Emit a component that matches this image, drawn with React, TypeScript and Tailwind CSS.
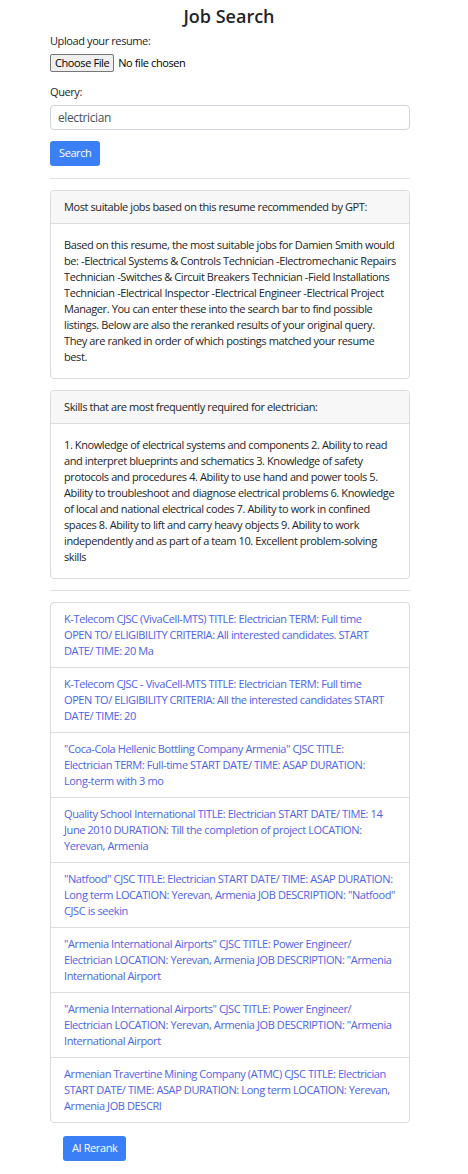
import React from 'react';

const jobs: string[][] = [
  ['K-Telecom CJSC (VivaCell-MTS) TITLE: Electrician TERM: Full time', 'OPEN TO/ ELIGIBILITY CRITERIA: All interested candidates. START', 'DATE/ TIME: 20 Ma'],
  ['K-Telecom CJSC - VivaCell-MTS TITLE: Electrician TERM: Full time', 'OPEN TO/ ELIGIBILITY CRITERIA: All the interested candidates START', 'DATE/ TIME: 20'],
  ['"Coca-Cola Hellenic Bottling Company Armenia" CJSC TITLE:', 'Electrician TERM: Full-time START DATE/ TIME: ASAP DURATION:', 'Long-term with 3 mo'],
  ['Quality School International TITLE: Electrician START DATE/ TIME: 14', 'June 2010 DURATION: Till the completion of project LOCATION:', 'Yerevan, Armenia'],
  ['"Natfood" CJSC TITLE: Electrician START DATE/ TIME: ASAP DURATION:', 'Long term LOCATION: Yerevan, Armenia JOB DESCRIPTION: "Natfood"', 'CJSC is seekin'],
  ['"Armenia International Airports" CJSC TITLE: Power Engineer/', 'Electrician LOCATION: Yerevan, Armenia JOB DESCRIPTION: "Armenia', 'International Airport'],
  ['"Armenia International Airports" CJSC TITLE: Power Engineer/', 'Electrician LOCATION: Yerevan, Armenia JOB DESCRIPTION: "Armenia', 'International Airport'],
  ['Armenian Travertine Mining Company (ATMC) CJSC TITLE: Electrician', 'START DATE/ TIME: ASAP DURATION: Long term LOCATION: Yerevan,', 'Armenia JOB DESCRI'],
];

const gptLines = [
  'Based on this resume, the most suitable jobs for Damien Smith would',
  'be: -Electrical Systems & Controls Technician -Electromechanic Repairs',
  'Technician -Switches & Circuit Breakers Technician -Field Installations',
  'Technician -Electrical Inspector -Electrical Engineer -Electrical Project',
  'Manager. You can enter these into the search bar to find possible',
  'listings. Below are also the reranked results of your original query.',
  'They are ranked in order of which postings matched your resume',
  'best.',
];

const skillLines = [
  '1. Knowledge of electrical systems and components 2. Ability to read',
  'and interpret blueprints and schematics 3. Knowledge of safety',
  'protocols and procedures 4. Ability to use hand and power tools 5.',
  'Ability to troubleshoot and diagnose electrical problems 6. Knowledge',
  'of local and national electrical codes 7. Ability to work in confined',
  'spaces 8. Ability to lift and carry heavy objects 9. Ability to work',
  'independently and as part of a team 10. Excellent problem-solving',
  'skills',
];

const Lines: React.FC<{ lines: string[] }> = ({ lines }) => (
  <>
    {lines.map((l, i) => (
      <span key={i} className="block whitespace-nowrap">{l}</span>
    ))}
  </>
);

const Card: React.FC<{ title: string; lines: string[] }> = ({ title, lines }) => (
  <div className="border border-[#dcdcdc] rounded-[4px] overflow-hidden">
    <div className="bg-[#f7f7f7] border-b border-[#dcdcdc] px-[13px] h-[33px] flex items-center whitespace-nowrap">{title}</div>
    <div className="px-[13px] pt-[13px] pb-[13px] leading-[16px]">
      <Lines lines={lines} />
    </div>
  </div>
);

export default function App() {
  return (
    <div className="min-h-[1174px] bg-white text-[#212529] text-[11px] tracking-[-0.4px] font-['Open_Sans',sans-serif]">
      <div className="w-[360px] ml-[50px] pt-[4px]">
        <h1 className="text-center text-[18px] font-semibold leading-[24px] ml-[-2px] tracking-normal">Job Search</h1>
        <label className="block mt-[5px] leading-[16px]">Upload your resume:</label>
        <div className="flex items-center mt-[5px] h-[18px]">
          <span className="border border-[#767676] bg-[#efefef] rounded-[2px] px-[4px] h-[18px] flex items-center text-black">Choose File</span>
          <span className="ml-[4px] text-black">No file chosen</span>
        </div>
        <label className="block mt-[12px] leading-[16px]">Query:</label>
        <div className="mt-[5px] h-[25px] border border-[#ced4da] rounded-[4px] flex items-center px-[7px] text-[12px] text-[#495057]">electrician</div>
        <button className="mt-[11px] h-[25px] px-[9px] rounded-[3px] bg-[#3b7ff6] text-white block">Search</button>
        <hr className="mt-[12px] border-t border-[#e2e2e2]" />
        <div className="mt-[11px]">
          <Card title="Most suitable jobs based on this resume recommended by GPT:" lines={gptLines} />
        </div>
        <div className="mt-[11px]">
          <Card title="Skills that are most frequently required for electrician:" lines={skillLines} />
        </div>
        <hr className="mt-[11px] border-t border-[#e2e2e2]" />
        <div className="mt-[11px] border border-[#dcdcdc] rounded-[4px]">
          {jobs.map((j, i) => (
            <div key={i} className={`px-[13px] py-[8px] leading-[16px] text-[#4d63e6] ${i > 0 ? 'border-t border-[#dcdcdc]' : ''}`}>
              <Lines lines={j} />
            </div>
          ))}
        </div>
        <button className="mt-[13px] ml-[13px] h-[25px] px-[9px] rounded-[3px] bg-[#3b7ff6] text-white block">AI Rerank</button>
      </div>
    </div>
  );
}
